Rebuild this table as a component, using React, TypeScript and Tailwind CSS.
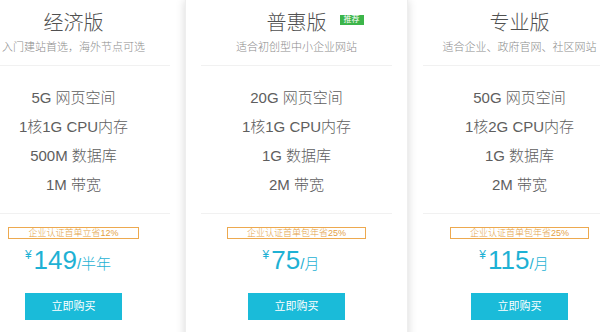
import React from 'react';

type Plan = {
    name: string;
    desc: string;
    features: string[];
    promo: string;
    price: string;
    unit: string;
    hot?: boolean;
};

const plans: Plan[] = [
    {
        name: '经济版',
        desc: '入门建站首选，海外节点可选',
        features: ['5G 网页空间', '1核1G CPU内存', '500M 数据库', '1M 带宽'],
        promo: '企业认证首单立省12%',
        price: '149',
        unit: '/半年',
    },
    {
        name: '普惠版',
        desc: '适合初创型中小企业网站',
        features: ['20G 网页空间', '1核1G CPU内存', '1G 数据库', '2M 带宽'],
        promo: '企业认证首单包年省25%',
        price: '75',
        unit: '/月',
        hot: true,
    },
    {
        name: '专业版',
        desc: '适合企业、政府官网、社区网站',
        features: ['50G 网页空间', '1核2G CPU内存', '1G 数据库', '2M 带宽'],
        promo: '企业认证首单包年省25%',
        price: '115',
        unit: '/月',
    },
];

function PlanCard({ plan }: { plan: Plan }) {
    return (
        <div
            className={`w-[223px] shrink-0 bg-white flex flex-col items-stretch ${
                plan.hot ? 'relative z-10 border-x border-[#eeeeee] shadow-[0_0_9px_rgba(0,0,0,0.16)]' : ''
            }`}
        >
            {/* Header */}
            <div className="pt-[11px] flex flex-col items-center">
                <div className="relative">
                    <span className="block text-[20px] leading-[24px] font-light text-[#505050]">{plan.name}</span>
                    {plan.hot && (
                        <span className="absolute left-[73px] top-[4px] bg-[#3cb54a] text-white text-[8px] leading-[10px] px-[4px] whitespace-nowrap">
                            推荐
                        </span>
                    )}
                </div>
                <p className="mt-[5px] text-[11px] leading-[14px] font-light text-[#8c8c8c] whitespace-nowrap">{plan.desc}</p>
            </div>

            <div className="mt-[11px] mx-[15px] h-px bg-[#f1f1f1]"></div>

            {/* Specs */}
            <ul className="pt-[17px] flex flex-col items-center">
                {plan.features.map((f) => (
                    <li key={f} className="h-[29px] leading-[29px] text-[15px] font-light text-[#5e5e5e] whitespace-nowrap">
                        {f}
                    </li>
                ))}
            </ul>

            <div className="mt-[14px] mx-[15px] h-px bg-[#f1f1f1]"></div>

            {/* Price */}
            <div className="flex flex-col items-center">
                <span className="mt-[13px] h-[12px] border border-[#eda94f] px-[19px] text-[9px] leading-[10px] font-light text-[#e39f45] whitespace-nowrap">
                    {plan.promo}
                </span>
                <div className="mt-[6px] pr-[11px] flex items-baseline text-[#1eb1d4] leading-[30px] whitespace-nowrap">
                    <span className="text-[12px] self-start leading-[20px] mr-[2px]">¥</span>
                    <span className="text-[26px]">{plan.price}</span>
                    <span className="text-[15px] font-light">{plan.unit}</span>
                </div>
                <button className="mt-[14px] w-[97px] h-[27px] bg-[#1abbd9] text-white text-[11px] leading-[27px]">
                    立即购买
                </button>
            </div>
        </div>
    );
}

export default function App() {
    return (
        <div
            className="w-[600px] h-[332px] overflow-hidden bg-white"
            style={{ fontFamily: '"Liberation Sans", "Noto Sans CJK SC", sans-serif' }}
        >
            <div className="flex ml-[-38px] h-[360px]">
                {plans.map((p) => (
                    <PlanCard key={p.name} plan={p} />
                ))}
            </div>
        </div>
    );
}
